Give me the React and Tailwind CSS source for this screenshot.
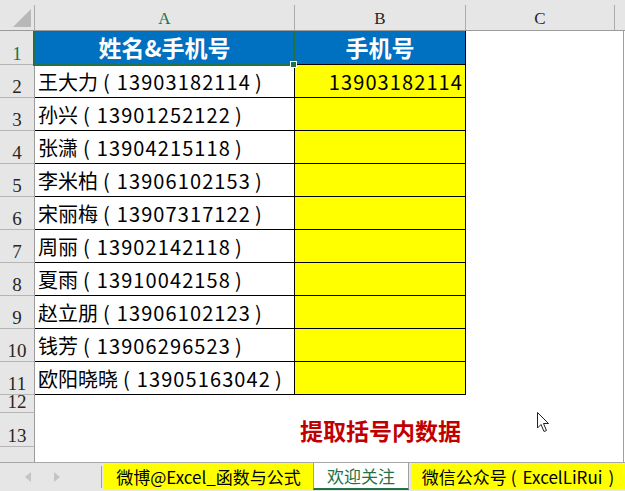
import React from "react";

const people = [
  ["王大力", "13903182114"],
  ["孙兴", "13901252122"],
  ["张潇", "13904215118"],
  ["李米柏", "13906102153"],
  ["宋丽梅", "13907317122"],
  ["周丽", "13902142118"],
  ["夏雨", "13910042158"],
  ["赵立朋", "13906102123"],
  ["钱芳", "13906296523"],
  ["欧阳晓晓", "13905163042"],
];

const cjk = "font-['Noto_Sans_CJK_SC',sans-serif]";
const serif = "font-['Liberation_Serif',serif]";

function RowHead({ n, active, h }) {
  return (
    <div
      className={`flex w-[35px] shrink-0 items-end justify-center border-r border-b border-r-[#9b9b9b] border-b-[#b5b5b5] bg-[#e6e6e6] pb-[1px] text-[19px] leading-none ${serif} ${h} ${
        active ? "text-[#217346]" : "text-[#262626]"
      }`}
    >
      {n}
    </div>
  );
}

function ColHead({ label, w, active }) {
  return (
    <div
      className={`flex h-[25px] shrink-0 items-center justify-center self-end border-r border-[#ababab] pt-[2px] text-[17px] leading-none ${serif} ${w} ${
        active ? "text-[#217346]" : "text-[#262626]"
      }`}
    >
      {label}
    </div>
  );
}

function Arrow({ dir }) {
  return (
    <svg width="6" height="10" viewBox="0 0 6 10">
      {dir === "left" ? (
        <polygon points="6,0 0,5 6,10" fill="#c4c4c4" />
      ) : (
        <polygon points="0,0 6,5 0,10" fill="#c4c4c4" />
      )}
    </svg>
  );
}

export default function App() {
  return (
    <div className="relative flex h-[491px] w-[625px] flex-col overflow-hidden bg-white">
      {/* column headers */}
      <div className="flex h-[31px] shrink-0 border-b border-[#9b9b9b] bg-[#e6e6e6]">
        <div className="relative h-[25px] w-[35px] shrink-0 self-end border-r border-[#ababab]">
          <svg className="absolute left-0 top-0" width="34" height="25" viewBox="0 0 34 25">
            <polygon points="13,22 31,22 31,4" fill="#b8b8b8" />
          </svg>
        </div>
        <ColHead label="A" w="w-[260px]" active />
        <ColHead label="B" w="w-[171px]" />
        <ColHead label="C" w="w-[149px]" />
      </div>

      {/* grid body */}
      <div className="flex w-[624px] flex-1 flex-col overflow-hidden border-r border-[#a0a0a0]">
        {/* row 1 */}
        <div className="flex shrink-0">
          <RowHead n="1" active h="h-[34px]" />
          <div className="relative flex h-[34px] w-[260px] shrink-0 items-center justify-center border-r border-b border-black bg-[#0070c0]">
            <span className={`text-[23px] font-bold leading-none text-white ${cjk}`}>姓名&手机号</span>
            <div className="absolute -left-[2px] -top-[1px] z-10 h-[36px] w-[262px] border-2 border-[#217346]" />
            <div className="absolute left-[255px] top-[30px] z-20 h-[7px] w-[7px] border border-white bg-[#217346]" />
          </div>
          <div className="flex h-[34px] w-[171px] shrink-0 items-center justify-center border-r border-b border-black bg-[#0070c0]">
            <span className={`text-[23px] font-bold leading-none text-white ${cjk}`}>手机号</span>
          </div>
        </div>

        {/* rows 2-11 */}
        {people.map(([name, phone], i) => (
          <div key={phone} className="flex shrink-0">
            <RowHead n={i + 2} h="h-[33px]" />
            <div className="flex h-[33px] w-[260px] shrink-0 items-center border-r border-b border-black pl-[3px] pt-[1px]">
              <span className={`flex items-center whitespace-nowrap text-[20px] leading-none text-black ${cjk}`}>
                <span>{name}</span>
                <span className="ml-[5px] mr-[7px]">(</span>
                <span className="tracking-[1.1px]">{phone}</span>
                <span className="ml-[4px]">)</span>
              </span>
            </div>
            <div className="flex h-[33px] w-[171px] shrink-0 items-center justify-end border-r border-b border-black bg-[#ffff00] pr-[2px] pt-[1px]">
              {i === 0 && (
                <span className={`text-[20px] leading-none tracking-[1.1px] text-black ${cjk}`}>{phone}</span>
              )}
            </div>
          </div>
        ))}

        {/* row 12 */}
        <div className="flex shrink-0">
          <RowHead n="12" h="h-[18px]" />
        </div>

        {/* row 13 */}
        <div className="flex shrink-0">
          <RowHead n="13" h="h-[34px]" />
          <div className="h-[34px] w-[260px] shrink-0" />
          <div className="flex h-[34px] w-[171px] shrink-0 items-center justify-center">
            <span className={`whitespace-nowrap text-[23px] font-bold leading-none text-[#c00000] ${cjk}`}>
              提取括号内数据
            </span>
          </div>
        </div>

        {/* row 14 */}
        <div className="flex shrink-0">
          <RowHead n="" h="h-[33px]" />
        </div>
      </div>

      {/* sheet tabs */}
      <div className={`flex h-[29px] shrink-0 border-t border-[#a6a6a6] bg-[#e6e6e6] text-[17px] leading-none ${cjk}`}>
        <div className="flex w-[101px] shrink-0 items-center">
          <span className="ml-[25px] flex"><Arrow dir="left" /></span>
          <span className="ml-[23px] flex"><Arrow dir="right" /></span>
        </div>
        <div className="my-[3px] w-px shrink-0 bg-[#a0a0a0]" />
        <div className="mb-[2px] ml-[2px] mt-[1px] flex w-[209px] shrink-0 items-center justify-center bg-[#ffff00] text-black">
          微博@Excel_函数与公式
        </div>
        <div className="mb-[1px] flex w-[96px] shrink-0 items-center justify-center border-x border-b-2 border-x-[#a0a0a0] border-b-[#217346] bg-white text-[#217346]">
          欢迎关注
        </div>
        <div className="mb-[2px] ml-[2px] mt-[1px] flex flex-1 items-center justify-center bg-[#ffff00] text-black">
          <span>微信公众号</span>
          <span className="ml-[4px] mr-[6px]">(</span>
          <span>ExcelLiRui</span>
          <span className="ml-[6px]">)</span>
        </div>
      </div>

      {/* mouse pointer */}
      <svg className="absolute left-[537px] top-[412px]" width="13" height="21" viewBox="0 0 13 21">
        <path d="M0.5 0.5 L0.5 16 L4 12.5 L7 19.5 L9.5 18.5 L6.5 11.5 L11.5 11.5 Z" fill="white" stroke="#222" strokeWidth="1" />
      </svg>
    </div>
  );
}
